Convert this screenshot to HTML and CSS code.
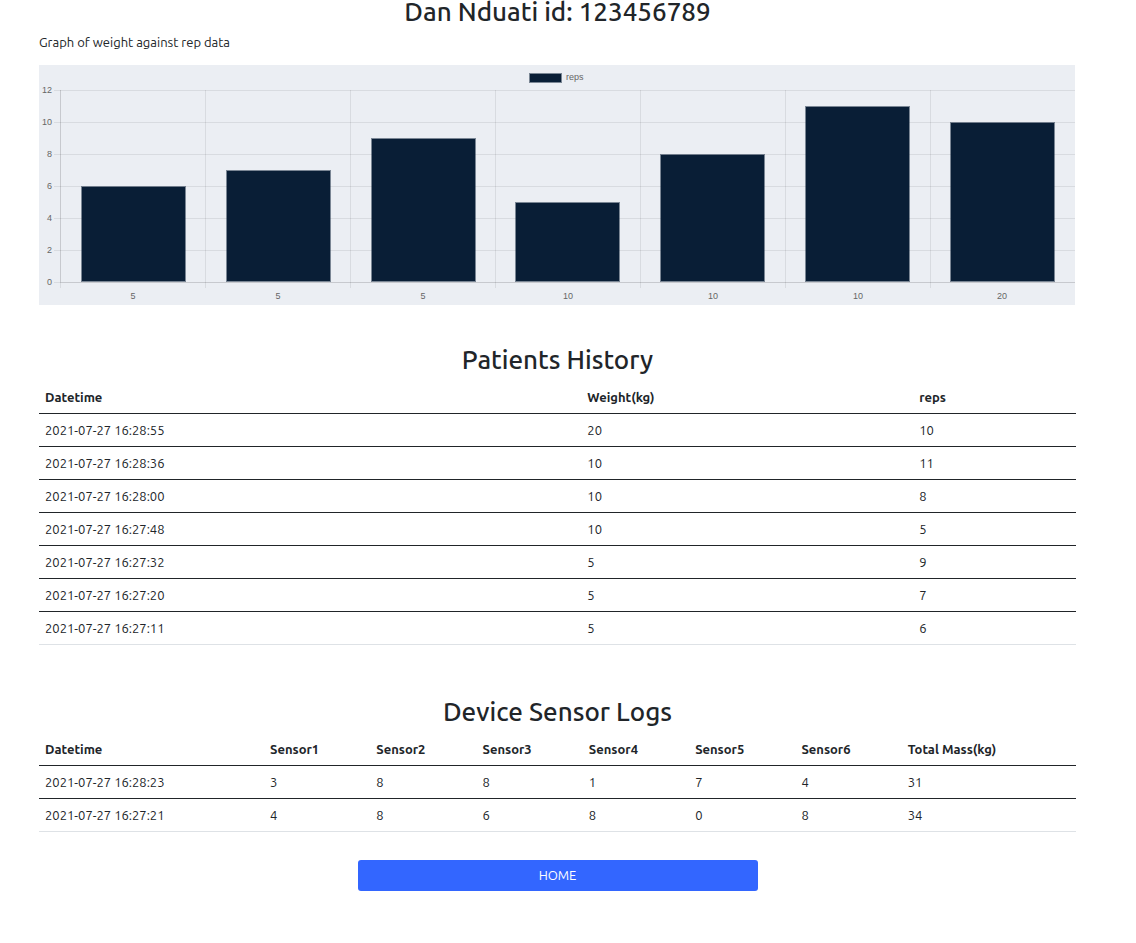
FILE: index.html
```html
<!DOCTYPE html>
<html lang="en">
<head>
<meta charset="utf-8">
<meta name="viewport" content="width=device-width, initial-scale=1">
<title>Dan Nduati</title>
<link rel="stylesheet" href="styles.css">
</head>
<body>
<main class="page">
  <section class="section">
    <h1 class="title title-main">Dan Nduati id: 123456789</h1>
    <p class="caption">Graph of weight against rep data</p>
    <svg class="chart" viewBox="0 0 1037 240" role="img" aria-label="Reps by weight">
      <rect class="plot" width="1036" height="240"/>
      <path class="grid" d="M15 25.5H1036M15 57.5H1036M15 89.5H1036M15 121.5H1036M15 153.5H1036M15 185.5H1036M15 217.5H1036M21.5 25V223M166.5 25V223M311.5 25V223M456.5 25V223M601.5 25V223M746.5 25V223M891.5 25V223"/>
      <path class="grid" d="M21.5 25V217M21 217.5H1036"/>
      <g class="bars">
        <rect x="491" y="9" width="31" height="8"/>
        <rect x="43" y="122" width="103" height="94"/>
        <rect x="188" y="106" width="103" height="110"/>
        <rect x="333" y="74" width="103" height="142"/>
        <rect x="477" y="138" width="103" height="78"/>
        <rect x="622" y="90" width="103" height="126"/>
        <rect x="767" y="42" width="103" height="174"/>
        <rect x="912" y="58" width="103" height="158"/>
      </g>
      <text class="tick" x="527" y="15">reps</text>
      <g class="tick tick-y">
        <text x="13" y="28">12</text><text x="13" y="60">10</text><text x="13" y="92">8</text><text x="13" y="124">6</text><text x="13" y="156">4</text><text x="13" y="188">2</text><text x="13" y="220">0</text>
      </g>
      <g class="tick tick-x">
        <text x="94" y="234">5</text><text x="239" y="234">5</text><text x="384" y="234">5</text><text x="529" y="234">10</text><text x="674" y="234">10</text><text x="819" y="234">10</text><text x="963" y="234">20</text>
      </g>
    </svg>
  </section>

  <section class="section">
    <h2 class="title">Patients History</h2>
    <table class="table">
      <colgroup><col class="col-date"><col class="col-weight"><col></colgroup>
      <thead><tr><th scope="col">Datetime</th><th scope="col">Weight(kg)</th><th scope="col">reps</th></tr></thead>
      <tbody>
        <tr><td>2021-07-27 16:28:55</td><td>20</td><td>10</td></tr>
        <tr><td>2021-07-27 16:28:36</td><td>10</td><td>11</td></tr>
        <tr><td>2021-07-27 16:28:00</td><td>10</td><td>8</td></tr>
        <tr><td>2021-07-27 16:27:48</td><td>10</td><td>5</td></tr>
        <tr><td>2021-07-27 16:27:32</td><td>5</td><td>9</td></tr>
        <tr><td>2021-07-27 16:27:20</td><td>5</td><td>7</td></tr>
        <tr><td>2021-07-27 16:27:11</td><td>5</td><td>6</td></tr>
      </tbody>
    </table>
  </section>

  <section class="section section-logs">
    <h2 class="title">Device Sensor Logs</h2>
    <table class="table">
      <colgroup><col class="col-log"><col class="col-sensor" span="6"><col></colgroup>
      <thead><tr><th scope="col">Datetime</th><th scope="col">Sensor1</th><th scope="col">Sensor2</th><th scope="col">Sensor3</th><th scope="col">Sensor4</th><th scope="col">Sensor5</th><th scope="col">Sensor6</th><th scope="col">Total Mass(kg)</th></tr></thead>
      <tbody>
        <tr><td>2021-07-27 16:28:23</td><td>3</td><td>8</td><td>8</td><td>1</td><td>7</td><td>4</td><td>31</td></tr>
        <tr><td>2021-07-27 16:27:21</td><td>4</td><td>8</td><td>6</td><td>8</td><td>0</td><td>8</td><td>34</td></tr>
      </tbody>
    </table>
  </section>

  <a class="button" href="#">HOME</a>
</main>
</body>
</html>
```
FILE: styles.css
```css
* { box-sizing: border-box; }

body {
  margin: 0;
  background: #fff;
  color: #212529;
  font-family: Ubuntu, "Noto Sans", "Open Sans", sans-serif;
  font-size: 13px;
  line-height: 20px;
}

.page { padding: 0 60px 52px 39px; }
.section { margin-bottom: 52px; }
.section:first-child { margin-bottom: 40px; }
.section-logs { margin-bottom: 28px; }

.title {
  margin: 0 0 6px;
  font-size: 26px;
  font-weight: 500;
  line-height: 30px;
  text-align: center;
}

.title-main {
  margin-bottom: 8px;
  line-height: 24px;
}

.caption { margin: 0 0 13px; }

.chart {
  display: block;
  width: 100%;
}

.plot { fill: #ebeef3; }
.grid { fill: none; stroke: rgba(0, 0, 0, 0.08); }

.bars rect {
  fill: #091e36;
  stroke: rgba(9, 30, 54, 0.5);
  stroke-width: 2;
  paint-order: stroke;
}

.tick {
  fill: #666;
  font-family: "Liberation Sans", Arial, sans-serif;
  font-size: 9px;
}

.tick-y { text-anchor: end; }
.tick-x { text-anchor: middle; }

.table {
  width: 100%;
  border-collapse: collapse;
  table-layout: fixed;
}

.table th,
.table td {
  padding: 6px;
  border-bottom: 1px solid #212529;
  text-align: left;
}

.table tbody tr:last-child td { border-bottom-color: #dee2e6; }

.col-date { width: 52.3%; }
.col-weight { width: 32%; }
.col-log { width: 21.7%; }
.col-sensor { width: 10.25%; }

.button {
  display: block;
  width: 100%;
  max-width: 400px;
  margin: 0 auto;
  padding: 5px 12px;
  border-radius: 3px;
  background: #3366ff;
  color: #fff;
  line-height: 21px;
  text-align: center;
  text-decoration: none;
}
```
